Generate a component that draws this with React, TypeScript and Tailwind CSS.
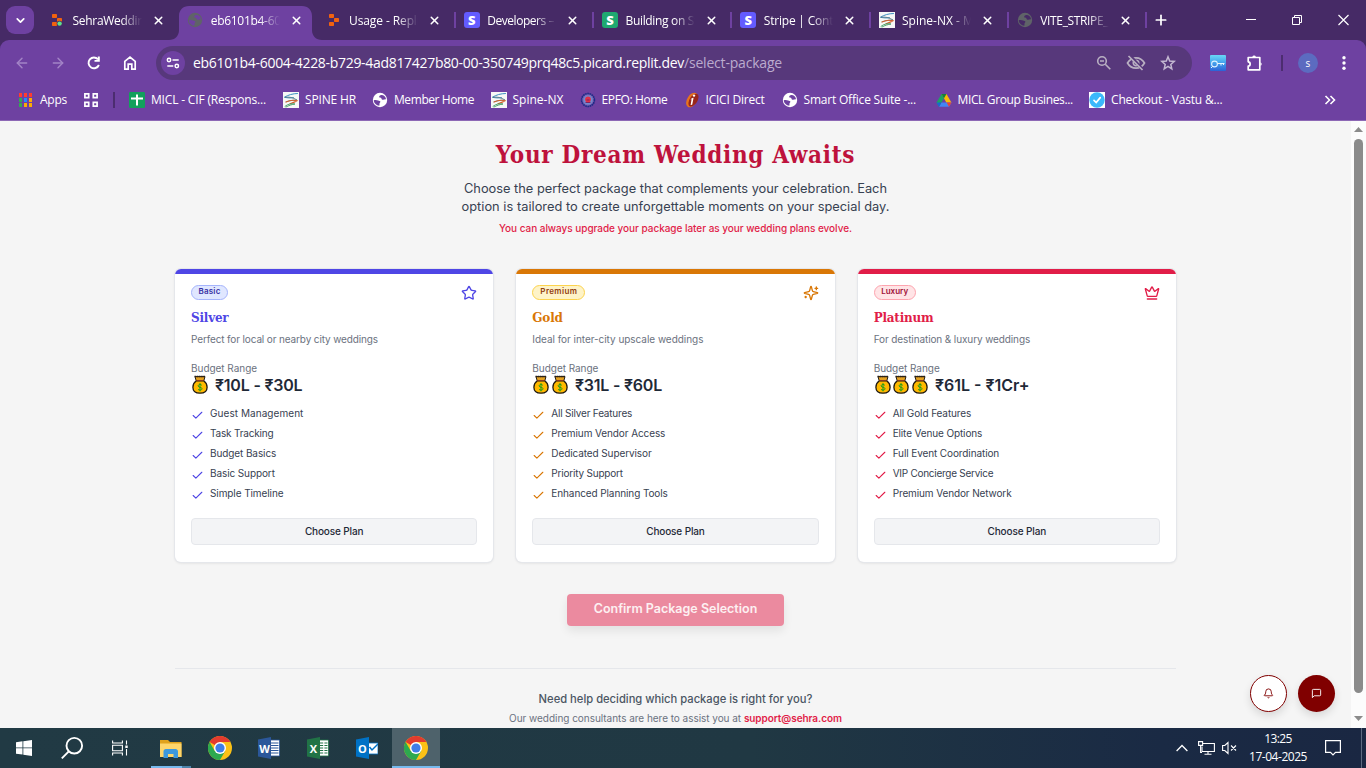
import React from "react";
import { Star, Check, Bell, X, ArrowLeft, ArrowRight, ChevronDown, Plus } from "lucide-react";

type IconProps = { className?: string };

function ReplitIcon({ dot }: { dot?: boolean }) {
  return (
    <svg viewBox="0 0 16 16" className="h-4 w-4 shrink-0">
      <rect x="3" y="2" width="5" height="4" rx=".8" fill="#f2620f" />
      <rect x="8" y="6" width="5" height="4" rx=".8" fill="#f2620f" />
      <rect x="3" y="10" width="5" height="4" rx=".8" fill="#f2620f" />
      {dot && <circle cx="10.6" cy="11.6" r="2.9" fill="#462a66" />}
      {dot && <circle cx="10.6" cy="11.6" r="2.2" fill="#5fe08a" />}
    </svg>
  );
}

function GlobeIcon({ light, active }: { light?: boolean; active?: boolean }) {
  return (
    <svg viewBox="0 0 16 16" className="h-4 w-4 shrink-0">
      <circle cx="8" cy="8" r="7.2" fill={light ? "#ffffff" : "#5f6368"} />
      <path
        d="M1.700 8.300c1.500-.5 3.200-.4 4.400.2 1 .5 1.900.2 2.200 1 .3.900-.7 1.100-.8 2-.1.700.2 1.300-.2 2.300C4.300 13.500 2 11.500 1.700 8.300zM8.600 3.200c-1 .3-1.600.8-1.300 1.700.3.800 1.300.4 1.900 1.100.4.600.3 1.500 1.300 1.700 1.300.3 2-.5 3.600-.3C13.700 4.700 11.500 2.700 8.600 3.200z"
        fill={light || active ? "#6e41a1" : "#462a66"}
      />
    </svg>
  );
}

function SBadge({ green }: { green?: boolean }) {
  return (
    <span className={`flex h-4 w-4 shrink-0 items-center justify-center rounded-[3px] font-['Open_Sans',sans-serif] text-[13px] leading-none font-extrabold text-white ${green ? "bg-[#1fa971]" : "bg-[#635bff]"}`}>
      S
    </span>
  );
}

function SpineIcon() {
  return (
    <svg viewBox="0 0 16 16" className="h-4 w-4 shrink-0">
      <rect width="16" height="16" fill="#f7f8f6" />
      <g fill="none" strokeLinecap="round">
        <path d="M14.500 1.500C10 1.500 5 3 1.500 5.200c3 .8 6 .9 9 .5" stroke="#3a8fc0" strokeWidth="1" />
        <path d="M2 5.300c4-.8 8 .2 12 2.700C10 8.200 6 8.500 3 9.800" stroke="#4f6f7e" strokeWidth=".8" />
        <path d="M3 10c4-1.800 8-2 11-1.200-2 1.300-4.500 2.100-7 2.900" stroke="#d4622d" strokeWidth="1.100" />
        <path d="M2 14.300c3-2.500 7-3 10-2.300-3 .5-6 1.300-9 3" stroke="#3f9b62" strokeWidth=".9" />
      </g>
    </svg>
  );
}

function SheetIcon() {
  return (
    <svg viewBox="0 0 16 16" className="h-4 w-4 shrink-0">
      <rect width="16" height="16" rx="1.200" fill="#12a05c" />
      <path d="M7 2.500h2v3h5v2H9v6H7v-6H2v-2h5z" fill="#fff" />
    </svg>
  );
}

function EpfoIcon() {
  return (
    <svg viewBox="0 0 16 16" className="h-4 w-4 shrink-0">
      <circle cx="8" cy="8" r="6.400" fill="#7b68b8" stroke="#1e2a86" strokeWidth="1.700" strokeDasharray="1.700 .5" />
      <circle cx="8" cy="8" r="4.500" fill="#6f8ad0" />
      <circle cx="8" cy="7.500" r="2.900" fill="#e0304a" />
      <path d="M5.500 10.500h5M6.500 8h3" stroke="#7d1d5a" strokeWidth=".9" />
    </svg>
  );
}

function IciciIcon() {
  return (
    <svg viewBox="0 0 16 16" className="h-4 w-4 shrink-0">
      <g transform="rotate(32 8 8)">
        <ellipse cx="8" cy="8" rx="4.900" ry="8" fill="#e8731c" />
        <ellipse cx="9.300" cy="7.300" rx="3.900" ry="7.200" fill="#98261c" />
      </g>
      <circle cx="10" cy="3.600" r="1.200" fill="#fff" />
      <path d="M6.300 7.200c1.200-.9 2.400-1.500 3.300-1.500L8.200 12.800 6.600 13l1-5.700z" fill="#fff" />
    </svg>
  );
}

function DriveIcon() {
  return (
    <svg viewBox="0 0 16 16" className="h-4 w-4 shrink-0">
      <path d="M5.500 2h5l5 8.700h-5z" fill="#fbbc04" />
      <path d="M5.500 2 8 6.300 3 14.800.5 10.500z" fill="#1ea362" />
      <path d="M5.500 2h5L8 6.300z" fill="#188038" />
      <path d="M5.500 10.600h10L13 14.800H3z" fill="#4285f4" />
      <path d="M10.600 10.600h4.900L13 14.800z" fill="#ea4335" />
      <path d="M.5 10.500h5L3 14.800z" fill="#1967d2" />
    </svg>
  );
}

function CheckoutIcon() {
  return (
    <svg viewBox="0 0 16 16" className="h-4 w-4 shrink-0">
      <rect width="16" height="16" fill="#fff" />
      <circle cx="8" cy="8" r="7.700" fill="#3bb8fb" />
      <path d="m5 8.400 2.200 2.200 4-5" stroke="#fff" strokeWidth="1.700" fill="none" strokeLinecap="round" />
    </svg>
  );
}

function AppsIcon() {
  const colors = ["#ff3b30", "#ff3b30", "#ff3b30", "#34a853", "#1e8cff", "#fbab04", "#34a853", "#fbab04", "#fbab04"];
  return (
    <svg viewBox="0 0 14 14" className="h-[14px] w-[14px] shrink-0" shapeRendering="crispEdges">
      {colors.map((c, i) => (
        <rect key={i} x={(i % 3) * 5} y={Math.floor(i / 3) * 5} width="3" height="4" fill={c} />
      ))}
    </svg>
  );
}

const tabs: { icon: React.ReactNode; title: string; active?: boolean; divider?: boolean; tracking: string }[] = [
  { icon: <ReplitIcon dot />, title: "SehraWedding", tracking: "tracking-[-0.3px]" },
  { icon: <GlobeIcon active />, title: "eb6101b4-6004", active: true, tracking: "tracking-[-0.3px]" },
  { icon: <ReplitIcon />, title: "Usage - Replit", divider: true, tracking: "tracking-[-0.1px]" },
  { icon: <SBadge />, title: "Developers – S", divider: true, tracking: "tracking-[-0.46px]" },
  { icon: <SBadge green />, title: "Building on Stripe", divider: true, tracking: "tracking-[-0.33px]" },
  { icon: <SBadge />, title: "Stripe | Contact", divider: true, tracking: "tracking-[-0.2px]" },
  { icon: <SpineIcon />, title: "Spine-NX - My", divider: true, tracking: "tracking-[0px]" },
  { icon: <GlobeIcon />, title: "VITE_STRIPE_PU", divider: true, tracking: "tracking-[-0.35px]" },
];

function TabStrip() {
  return (
    <div className="flex h-10 items-start bg-[#462a66] text-white">
      <div className="mt-[6px] ml-[6px] flex h-7 w-7 items-center justify-center rounded-[9px] bg-[#6e41a1]">
        <ChevronDown className="h-[13px] w-[13px]" strokeWidth={3.200} />
      </div>
      <div className="ml-[7px] flex w-[1106px]">
        {tabs.map((t) => (
          <div key={t.title} className="relative flex h-10 flex-1 pt-[6px]">
            {t.active && (
              <svg viewBox="0 0 153 34" className="absolute top-[6px] -left-[10px] h-[34px] w-[153px]">
                <path d="M0 34c6 0 10-4 10-10V10C10 4 14 0 20 0h113c6 0 10 4 10 10v14c0 6 4 10 10 10z" fill="#6e41a1" />
              </svg>
            )}
            <div className="relative flex h-7 w-full items-center pl-[8px]">
              {t.icon}
              <div className={`ml-[7.500px] h-5 w-[69px] overflow-hidden text-[12px] leading-[21px] whitespace-nowrap [mask-image:linear-gradient(to_right,black_70%,transparent)] ${t.tracking}`}>
                {t.title}
              </div>
              <X className="ml-[10px] h-[13px] w-[13px] shrink-0" strokeWidth={2.800} />
              {t.divider && <div className="absolute top-[6px] right-0 h-4 w-[2px] bg-[#6e41a1]" />}
            </div>
          </div>
        ))}
      </div>
      <Plus className="mt-[12px] ml-[6px] h-4 w-4" strokeWidth={2.600} />
      <div className="flex-1" />
      <svg viewBox="0 0 104 12" className="mt-[14px] mr-[16px] h-3 w-[104px]" fill="none" stroke="#fff" strokeWidth="1">
        <path d="M0 5.500h10" />
        <path d="M46.500 3.500h7v7h-7zM48.500 3.500v-2h7v7h-2" />
        <path d="m92.500 1 10 10m0-10-10 10" strokeWidth="1.200" />
      </svg>
    </div>
  );
}

function Toolbar() {
  return (
    <div className="flex h-[46px] items-center rounded-t-[9px] bg-[#6e41a1] text-white">
      <ArrowLeft className="ml-[14px] h-4 w-4 text-[#a384c6]" strokeWidth={2.200} />
      <ArrowRight className="ml-5 h-4 w-4 text-[#a384c6]" strokeWidth={2.200} />
      <svg viewBox="0 0 16 16" className="ml-[20px] h-4 w-4" fill="none" stroke="#fff" strokeWidth="1.900">
        <path d="M12.900 10A5.400 5.400 0 1 1 12 4.300" />
        <path d="M13.800 1.500v5.300H8.500V5h3.300V1.500z" fill="#fff" stroke="none" />
      </svg>
      <svg viewBox="0 0 16 16" className="ml-5 h-4 w-4" fill="none" stroke="#fff" strokeWidth="1.700">
        <path d="M2.800 14.200V6.400L8 2.200l5.200 4.200v7.800H9.800V9.200H6.200v5z" />
      </svg>
      <div className="ml-[18px] flex h-[34px] w-[1036px] items-center rounded-full bg-[#57387b] pl-[5px]">
        <div className="flex h-6 w-6 items-center justify-center rounded-full bg-[#6e41a1]">
          <svg viewBox="0 0 14 12" className="h-3 w-[14px]" fill="none" stroke="#fff" strokeWidth="1.500">
            <circle cx="3" cy="3" r="1.700" />
            <path d="M6.500 3h6.200M1.300 9h6" />
            <circle cx="10.800" cy="9" r="1.700" />
          </svg>
        </div>
        <div className="ml-[8px] w-[491px] text-[14px] leading-5 tracking-[-0.307px] whitespace-nowrap">
          eb6101b4-6004-4228-b729-4ad817427b80-00-350749prq48c5.picard.replit.dev
        </div>
        <div className="text-[14px] leading-5 tracking-[-0.195px] whitespace-nowrap text-[#bbabce]">/select-package</div>
        <div className="flex-1" />
        <svg viewBox="0 0 16 16" className="h-4 w-4" fill="none" stroke="#b9b0c2" strokeWidth="1.600">
          <circle cx="6" cy="6" r="4.300" />
          <path d="m9.300 9.300 5 5M4 6h4" />
        </svg>
        <svg viewBox="0 0 20 16" className="ml-[14px] h-4 w-5" fill="none" stroke="#b9b0c2" strokeWidth="1.700">
          <path d="M1.500 8C3.500 4.500 6.500 2.800 10 2.800S16.500 4.500 18.500 8c-2 3.500-5 5.200-8.500 5.200S3.500 11.500 1.500 8z" />
          <circle cx="10" cy="8" r="2.700" />
          <path d="M3.500 0l14 15.500" stroke="#57387b" strokeWidth="3" />
          <path d="M2.500 1l14 14" />
        </svg>
        <svg viewBox="0 0 16 16" className="mr-[16px] ml-[14px] h-4 w-4" fill="none" stroke="#c4b8d2" strokeWidth="1.500">
          <path d="m8 1.800 1.700 4.200 4.500.4-3.400 3 1 4.400L8 11.400l-3.800 2.400 1-4.400-3.400-3L6.300 6z" />
        </svg>
      </div>
      <svg viewBox="0 0 16 16" className="ml-[18px] h-4 w-4 shrink-0">
        <defs>
          <linearGradient id="key" x1="0" y1="0" x2="0" y2="1">
            <stop offset="0" stopColor="#6ad8f5" />
            <stop offset=".45" stopColor="#46a6ee" />
            <stop offset="1" stopColor="#2b62d6" />
          </linearGradient>
        </defs>
        <rect width="16" height="16" rx="1" fill="url(#key)" />
        <circle cx="4.500" cy="9" r="2.900" fill="none" stroke="#d8f0ff" strokeWidth="1.100" />
        <path d="M7.300 8.500h7.200M11 8.500v2M13.500 8.500v1.500M1 13l1.700-1.700" stroke="#e6f6ff" strokeWidth="1" />
      </svg>
      <svg viewBox="0 0 18 18" className="ml-[20px] h-[18px] w-[18px]" fill="none" stroke="#fff" strokeWidth="1.700" strokeLinejoin="round">
        <path d="M2.200 3.500h11.600v12.300H2.200v-3.600c2.600-.2 2.600-4.200 0-4.400z" />
        <path d="M6.300 2.900a1.900 1.900 0 0 1 3.600 0zM14.400 8.200a1.900 1.900 0 0 1 0 3.600z" fill="#fff" stroke="none" />
      </svg>
      <div className="ml-[17px] h-4 w-[2px] bg-[#4c2d70]" />
      <div className="ml-[15px] flex h-5 w-5 items-center justify-center rounded-full bg-[#5c6bc0] pb-px text-[10px] leading-none">s</div>
      <svg viewBox="0 0 4 16" className="ml-[24px] h-4 w-1" fill="#fff">
        <circle cx="2" cy="2.800" r="1.700" />
        <circle cx="2" cy="8" r="1.700" />
        <circle cx="2" cy="13.200" r="1.700" />
      </svg>
    </div>
  );
}

const bookmarks: { icon: React.ReactNode; label: string; cls: string }[] = [
  { icon: <SheetIcon />, label: "MICL - CIF (Respons...", cls: "w-[154px] tracking-[-0.17px]" },
  { icon: <SpineIcon />, label: "SPINE HR", cls: "w-[89px] tracking-[-0.15px]" },
  { icon: <GlobeIcon light />, label: "Member Home", cls: "w-[118.500px] tracking-[-0.42px]" },
  { icon: <SpineIcon />, label: "Spine-NX", cls: "w-[89px] tracking-[0px]" },
  { icon: <EpfoIcon />, label: "EPFO: Home", cls: "w-[104px] tracking-[-0.36px]" },
  { icon: <IciciIcon />, label: "ICICI Direct", cls: "w-[98px] tracking-[-0.22px]" },
  { icon: <GlobeIcon light />, label: "Smart Office Suite -...", cls: "w-[154px] tracking-[-0.2px]" },
  { icon: <DriveIcon />, label: "MICL Group Busines...", cls: "w-[153.500px] tracking-[-0.36px]" },
  { icon: <CheckoutIcon />, label: "Checkout - Vastu &...", cls: "w-[154px] tracking-[-0.18px]" },
];

function BookmarksBar() {
  return (
    <div className="flex h-[35px] items-center border-b border-[#8d68b5] bg-[#6e41a1] pb-[6px] pl-[19px] text-[12px] leading-4 text-white">
      <AppsIcon />
      <span className="ml-[7px] w-[44px] tracking-[-0.25px]">Apps</span>
      <svg viewBox="0 0 14 14" className="h-[14px] w-[14px]" fill="none" stroke="#fff" strokeWidth="1.700">
        <path d="M.9.900h3.800v3.800H.9zM9.300.9h3.800v3.800H9.300zM.9 9.300h3.800v3.800H.9zM9.300 9.300h3.800v3.800H9.300z" />
      </svg>
      <div className="mr-[14px] ml-[15px] h-4 w-[2px] bg-[#4c2d70]" />
      {bookmarks.map((b) => (
        <div key={b.label} className={`flex shrink-0 items-center gap-[6px] whitespace-nowrap ${b.cls}`}>
          {b.icon}
          <span>{b.label}</span>
        </div>
      ))}
      <div className="flex-1" />
      <svg viewBox="0 0 12 10" className="mr-[30px] h-[10px] w-3" fill="none" stroke="#fff" strokeWidth="1.600">
        <path d="m1.500 1 4 4-4 4M6.500 1l4 4-4 4" />
      </svg>
    </div>
  );
}

function MoneyBag() {
  return (
    <svg viewBox="0 0 18 20" className="h-5 w-[18px] shrink-0">
      <path d="M5.300 5.800C2.800 7.700 1.900 10 1.900 12.200c0 3.800 2.800 6 7.100 6s7.100-2.200 7.100-6c0-2.200-.9-4.500-3.400-6.400z" fill="#ffb900" stroke="#1f1a12" strokeWidth="1.300" />
      <path d="M4 1.600h10l-1.100 3.900H5.100z" fill="#e3a020" stroke="#1f1a12" strokeWidth="1" strokeLinejoin="round" />
      <path d="M3.500 1.600h11" stroke="#2b2118" strokeWidth="1.500" strokeDasharray="1.600 .6" />
      <path d="M5.300 5.500h7.400" stroke="#8a3c24" strokeWidth="1.200" />
      <path d="M10.800 10.300c-.5-.6-1.100-.8-1.800-.8-1.100 0-1.800.5-1.800 1.400 0 1.900 3.800.9 3.800 2.800 0 .9-.8 1.400-2 1.400-.9 0-1.600-.3-2-.9M9 8.100v8.200" stroke="#1a9c1a" strokeWidth="1" fill="none" />
    </svg>
  );
}

function SparklesIcon({ className }: IconProps) {
  return (
    <svg viewBox="0 0 24 24" className={className} fill="none" stroke="currentColor" strokeWidth="2" strokeLinecap="round" strokeLinejoin="round">
      <path d="M9.937 15.500A2 2 0 0 0 8.500 14.063l-6.135-1.582a.5.5 0 0 1 0-.962L8.500 9.936A2 2 0 0 0 9.937 8.500l1.582-6.135a.5.5 0 0 1 .963 0L14.063 8.500A2 2 0 0 0 15.500 9.937l6.135 1.581a.5.5 0 0 1 0 .964L15.500 14.063a2 2 0 0 0-1.437 1.437l-1.582 6.135a.5.5 0 0 1-.963 0z" />
      <path d="M20 3v4M22 5h-4M4 17v2M5 18H3" />
    </svg>
  );
}

function CrownIcon({ className }: IconProps) {
  return (
    <svg viewBox="0 0 24 24" className={className} fill="none" stroke="currentColor" strokeWidth="2" strokeLinecap="round" strokeLinejoin="round">
      <path d="M11.562 3.266a.5.5 0 0 1 .876 0L15.390 8.870a1 1 0 0 0 1.516.294L21.183 5.500a.5.5 0 0 1 .798.519l-2.834 10.246a1 1 0 0 1-.956.734H5.810a1 1 0 0 1-.957-.734L2.020 6.020a.5.5 0 0 1 .798-.519l4.276 3.664a1 1 0 0 0 1.516-.294z" />
      <path d="M5 21h14" />
    </svg>
  );
}

const plans = [
  {
    badge: "Basic", badgeCls: "w-[37px] border-[#a5b4fc] bg-[#e0e7ff] text-[#3730a3] tracking-[0.2px]", bar: "bg-[#4f46e5]", color: "text-[#4f46e5]",
    icon: <Star className="h-4 w-4" />, name: "Silver", desc: "Perfect for local or nearby city weddings", descCls: "tracking-[-0.13px]",
    bags: 1, price: "₹10L - ₹30L", priceCls: "tracking-[-0.2px]",
    features: [["Guest Management", "tracking-[0.06px]"], ["Task Tracking", "tracking-[-0.18px]"], ["Budget Basics", "tracking-[-0.1px]"], ["Basic Support", "tracking-[-0.1px]"], ["Simple Timeline", "tracking-[-0.09px]"]],
  },
  {
    badge: "Premium", badgeCls: "w-[53px] border-[#fcd34d] bg-[#fef3c7] text-[#92400e] tracking-[0.38px]", bar: "bg-[#d97706]", color: "text-[#d97706]",
    icon: <SparklesIcon className="h-4 w-4" />, name: "Gold", desc: "Ideal for inter-city upscale weddings", descCls: "tracking-[-0.04px]",
    bags: 2, price: "₹31L - ₹60L", priceCls: "tracking-[-0.21px]",
    features: [["All Silver Features", "tracking-[-0.2px]"], ["Premium Vendor Access", "tracking-[-0.1px]"], ["Dedicated Supervisor", "tracking-[-0.1px]"], ["Priority Support", "tracking-[-0.2px]"], ["Enhanced Planning Tools", "tracking-[-0.1px]"]],
  },
  {
    badge: "Luxury", badgeCls: "w-[42px] border-[#fda4af] bg-[#ffe4e6] text-[#9f1239] tracking-[0.02px]", bar: "bg-[#e11d48]", color: "text-[#e11d48]",
    icon: <CrownIcon className="h-4 w-4" />, name: "Platinum", desc: "For destination & luxury weddings", descCls: "tracking-[-0.11px]",
    bags: 3, price: "₹61L - ₹1Cr+", priceCls: "tracking-[0px]",
    features: [["All Gold Features", "tracking-[-0.1px]"], ["Elite Venue Options", "tracking-[-0.13px]"], ["Full Event Coordination", "tracking-[-0.107px]"], ["VIP Concierge Service", "tracking-[-0.26px]"], ["Premium Vendor Network", "tracking-[-0.12px]"]],
  },
];

function PlanCard({ plan }: { plan: (typeof plans)[number] }) {
  return (
    <div className="flex h-[292.500px] flex-1 flex-col overflow-hidden rounded-[6px] bg-white shadow-[0_0_0_1px_#e5e7eb,0_1px_3px_rgba(0,0,0,0.12)]">
      <div className={`h-[5px] shrink-0 ${plan.bar}`} />
      <div className="flex flex-col px-[16px] pt-[11px]">
        <div className="flex h-4 items-center justify-between">
          <span className={`mb-px flex h-[15px] justify-center rounded-full border text-[8px] leading-[11px] font-semibold ${plan.badgeCls}`}>{plan.badge}</span>
          <span className={plan.color}>{plan.icon}</span>
        </div>
        <h3 className={`mt-[8px] h-[18px] font-['DejaVu_Serif_Condensed','DejaVu_Serif',serif] text-[13.300px] leading-[18px] font-bold tracking-[-0.2px] ${plan.color}`}>{plan.name}</h3>
        <p className={`mt-[4px] h-4 text-[10px] leading-4 text-[#6b7280] ${plan.descCls}`}>{plan.desc}</p>
        <p className="mt-[13px] h-4 text-[10px] leading-4 tracking-[-0.04px] text-[#6b7280]">Budget Range</p>
        <div className="-mt-px flex h-5 items-center">
          <span className="flex w-min gap-[0.700px]">
            {Array.from({ length: plan.bags }, (_, i) => (
              <MoneyBag key={i} />
            ))}
          </span>
          <span className={`ml-[6px] text-[16px] leading-5 font-semibold text-[#1f2937] ${plan.priceCls}`}>{plan.price}</span>
        </div>
        <ul className="mt-[8px]">
          {plan.features.map(([f, t]) => (
            <li key={f} className="flex h-5 items-center text-[10px] text-[#374151]">
              <Check className={`mt-[4px] mr-[6px] h-[13px] w-[13px] ${plan.color}`} />
              <span className={t}>{f}</span>
            </li>
          ))}
        </ul>
        <div className="mt-[15px] flex h-[27px] items-center justify-center rounded-[4px] border border-[#e5e7eb] bg-[#f3f4f6] text-[10px] font-medium tracking-[-0.13px] text-[#1f2937]">
          Choose Plan
        </div>
      </div>
    </div>
  );
}

function Page() {
  return (
    <div className="flex h-[607px] bg-[#f5f5f5]">
      <div className="relative flex-1 overflow-hidden">
        <div className="mx-auto flex w-[1001px] flex-col items-center font-['Inter',sans-serif] whitespace-nowrap">
          <h1 className="mt-[17px] h-[34px] font-['DejaVu_Serif_Condensed','DejaVu_Serif',serif] text-[24px] leading-[34px] font-bold tracking-[0.700px] text-[#be123c]">Your Dream Wedding Awaits</h1>
          <p className="mt-[8px] h-[18px] text-[12.800px] leading-[18px] text-[#374151]">Choose the perfect package that complements your celebration. Each</p>
          <p className="h-[18px] text-[12.800px] leading-[18px] tracking-[0.03px] text-[#374151]">option is tailored to create unforgettable moments on your special day.</p>
          <p className="mt-[4px] h-4 text-[10px] leading-4 font-medium tracking-[-0.038px] text-[#e11d48]">You can always upgrade your package later as your wedding plans evolve.</p>
          <div className="mt-[33px] flex w-full gap-[23px]">
            {plans.map((p) => (
              <PlanCard key={p.name} plan={p} />
            ))}
          </div>
          <div className="mt-[32.500px] flex h-8 w-[217px] items-center justify-center rounded-[4px] bg-[#eb8a9f] pb-px text-[12.500px] font-semibold text-[#fdf0f2] shadow-[0_5px_10px_rgba(0,0,0,0.08)]">
            Confirm Package Selection
          </div>
          <div className="mt-[42px] h-px w-full bg-[#e5e7eb]" />
          <p className="mt-[22px] h-4 text-[11.200px] leading-4 font-medium text-[#4b5563]">Need help deciding which package is right for you?</p>
          <p className="mt-[3px] h-4 text-[10px] leading-4 tracking-[-0.037px] text-[#6b7280]">
            Our wedding consultants are here to assist you at <span className="font-semibold tracking-[-0.066px] text-[#e11d48]">support@sehra.com</span>
          </p>
        </div>
        <div className="absolute right-[16px] bottom-[16px] flex gap-[11px]">
          <div className="flex h-[37px] w-[37px] items-center justify-center rounded-full border border-[#800000] bg-white text-[#800000] shadow-[0_4px_8px_rgba(0,0,0,0.12)]">
            <Bell className="h-[11px] w-[11px]" />
          </div>
          <div className="flex h-[37px] w-[37px] items-center justify-center rounded-full bg-[#800000] text-white shadow-[0_4px_8px_rgba(0,0,0,0.12)]">
            <svg viewBox="0 0 24 24" className="h-[11px] w-[11px]" fill="none" stroke="currentColor" strokeWidth="2" strokeLinejoin="round">
              <path d="M21 15a2 2 0 0 1-2 2H7l-4 4V5a2 2 0 0 1 2-2h14a2 2 0 0 1 2 2z" />
            </svg>
          </div>
        </div>
      </div>
      <div className="flex w-[15px] flex-col items-center bg-[#fcfcfc]">
        <svg viewBox="0 0 9 5" className="mt-[6px] h-[5px] w-[9px]"><path d="M4.500 0 9 5H0z" fill="#8b8b8b" /></svg>
        <div className="mt-[7px] h-[554px] w-[9px] rounded-full bg-[#8b8b8b]" />
        <svg viewBox="0 0 9 5" className="mt-[23px] h-[5px] w-[9px]"><path d="M0 0h9L4.500 5z" fill="#8b8b8b" /></svg>
      </div>
    </div>
  );
}

function ChromeLogo() {
  return (
    <svg viewBox="0 0 24 24" className="h-6 w-6">
      <circle cx="12" cy="12" r="12" fill="#fbc116" />
      <path d="M12 12 1.600 6A12 12 0 0 1 22.400 6H12z" fill="#e33b2e" />
      <path d="M1.600 6A12 12 0 0 0 12 24l5.200-9L12 12 6.800 15z" fill="#2da94f" />
      <circle cx="12" cy="12" r="6" fill="#fff" />
      <circle cx="12" cy="12" r="4.600" fill="#3f7ee8" />
    </svg>
  );
}

function OfficeLogo({ letter, color, kind }: { letter: string; color: string; kind: "doc" | "sheet" | "mail" }) {
  return (
    <div className="grid h-[22px] w-[22px]">
      <svg viewBox="0 0 22 22" className="col-start-1 row-start-1 h-[22px] w-[22px]">
        {kind === "mail" ? (
          <>
            <path d="M11 6h11v11H11z" fill="#fff" stroke={color} strokeWidth=".8" />
            <path d="m13.500 10 2.500 3 6-6" stroke={color} strokeWidth="1.500" fill="none" />
          </>
        ) : (
          <>
            <path d="M12 3h9.500v16H12z" fill="#fff" stroke={color} strokeWidth=".8" />
            <path d="M13 6h7.500M13 8.500h7.500M13 11h7.500M13 13.500h7.500M13 16h7.500" stroke={color} strokeWidth="1.200" />
            {kind === "sheet" && <path d="M16.800 4v14" stroke="#fff" strokeWidth="1.200" />}
          </>
        )}
        <path d="M0 2.500 13 0v22L0 19.500z" fill={color} />
      </svg>
      <span className="col-start-1 row-start-1 flex w-[13px] items-center justify-center text-[11px] leading-none font-bold text-white">{letter}</span>
    </div>
  );
}

function Taskbar() {
  return (
    <div className="flex h-10 items-center bg-[linear-gradient(to_right,#213a44,#203843_55%,#1a2a44_85%,#1a2742)] text-white">
      <div className="flex w-12 justify-center">
        <svg viewBox="0 0 16 16" className="h-4 w-4" fill="#fff">
          <path d="M0 2.200 6.500 1.300v6.200H0zM7.300 1.200 16 0v7.500H7.300zM0 8.300h6.500v6.300L0 13.700zM7.300 8.300H16V16l-8.700-1.200z" />
        </svg>
      </div>
      <div className="flex w-12 justify-center">
        <svg viewBox="0 0 24 24" className="h-6 w-6" fill="none" stroke="#fff" strokeWidth="1.900">
          <circle cx="14.300" cy="9.700" r="7.800" />
          <path d="m8.800 15.300-7 7" />
        </svg>
      </div>
      <div className="flex w-12 justify-center">
        <svg viewBox="0 0 16 16" className="h-4 w-4" fill="none" stroke="#fff" strokeWidth="1.100">
          <path d="M.6.500v2.500h9.800V.5M.6 15.500V13h9.800v2.500M.6 5.200h9.800v5.600H.6zM14.500.5v4M14.500 9v6.500" />
          <path d="M14.500 5.500v2.500" strokeWidth="2.400" />
        </svg>
      </div>
      <div className="ml-[7px] flex h-10 w-[40px] flex-col">
        <div className="flex flex-1 items-end justify-center pb-[8px]">
          <svg viewBox="0 0 22 19" className="h-[19px] w-[22px]">
            <path d="M0 1h8l2 2h11.500v15H0z" fill="#e0a21c" />
            <path d="M0 4.500h21.500V18H0z" fill="#fdd56b" />
            <path d="M3.500 19v-6.500c0-1.500 1-2.500 2.500-2.500h9.500c1.500 0 2.500 1 2.500 2.500V19h-4.500v-4H8v4z" fill="#3c98dd" />
          </svg>
        </div>
        <div className="flex h-[2px]"><div className="w-[31px] bg-[#76b9ed]" /><div className="flex-1 bg-[#4c83a9]" /></div>
      </div>
      <div className="ml-[5px] flex w-12 justify-center"><ChromeLogo /></div>
      <div className="flex w-[50px] justify-center"><OfficeLogo letter="W" color="#2b579a" kind="doc" /></div>
      <div className="flex w-[48px] justify-center"><OfficeLogo letter="X" color="#217346" kind="sheet" /></div>
      <div className="flex w-[50px] justify-center"><OfficeLogo letter="O" color="#0072c6" kind="mail" /></div>
      <div className="flex h-10 w-12 flex-col items-center border-b-2 border-[#76b9ed] bg-[#4e626b] pt-[8px]"><ChromeLogo /></div>
      <div className="flex-1" />
      <svg viewBox="0 0 12 8" className="mr-[2px] h-2 w-3" fill="none" stroke="#fff" strokeWidth="1.300">
        <path d="m.6 7 5.400-5.500L11.400 7" />
      </svg>
      <svg viewBox="0 0 17 14" className="ml-[8px] h-[14px] w-[17px]" fill="none" stroke="#fff" strokeWidth="1.100">
        <path d="M5 2.500h11.400v8H4V5.500M10 10.500V13M6.500 13.300h7" />
        <path d="M.6.600h4v3.800h-4zM2.600 4.500v7H4" />
      </svg>
      <svg viewBox="0 0 15 14" className="ml-[7px] h-[14px] w-[15px]" fill="none" stroke="#fff" strokeWidth="1.100">
        <path d="M.6 4.500h2.200L6 1.500v11l-3.200-3H.6zM9 4.500l5 5M14 4.500l-5 5" />
      </svg>
      <div className="ml-[11px] flex w-[60px] flex-col items-center text-[12px] leading-[18px]">
        <span className="tracking-[-0.65px]">13:25</span>
        <span className="tracking-[-0.46px]">17-04-2025</span>
      </div>
      <svg viewBox="0 0 16 16" className="ml-[17px] h-4 w-4" fill="none" stroke="#fff" strokeWidth="1.200">
        <path d="M.6.600h14.800v11.800h-4.900L8 15l-2.500-2.600H.6z" />
      </svg>
      <div className="ml-[20px] h-10 w-px bg-[#5d6a80]" />
      <div className="w-[4px]" />
    </div>
  );
}

export default function App() {
  return (
    <div className="flex h-[768px] w-[1366px] flex-col overflow-hidden bg-[#f5f5f5] font-['Open_Sans','Noto_Sans',sans-serif]">
      <TabStrip />
      <div className="bg-[#462a66]">
        <Toolbar />
      </div>
      <BookmarksBar />
      <Page />
      <Taskbar />
    </div>
  );
}
